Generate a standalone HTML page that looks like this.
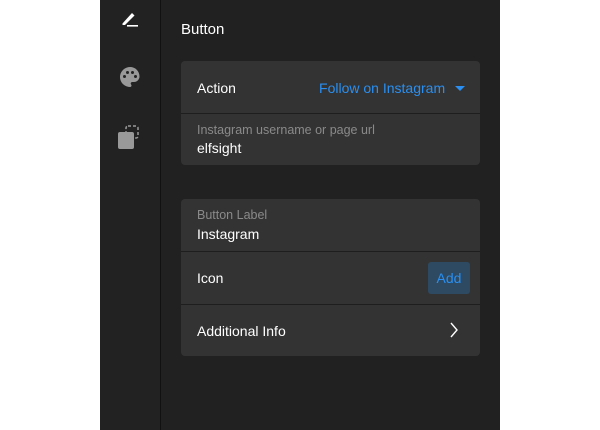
<!DOCTYPE html>
<html><head><style>
*{margin:0;padding:0;box-sizing:border-box}
body{width:600px;height:430px;background:#fff;font-family:"Liberation Sans",sans-serif;position:relative;overflow:hidden}
.side{position:absolute;left:100px;top:0;width:60px;height:430px;background:#222}
.line{position:absolute;left:160px;top:0;width:1px;height:430px;background:#111}
.main{position:absolute;left:161px;top:0;width:339px;height:430px;background:#212121}
.t{position:absolute;left:181px;top:21px;color:#fff;font-size:15px}
.card{position:absolute;left:181px;width:299px;background:#333;border-radius:4px}
.row{position:absolute;left:16px;color:#fff;font-size:14px}
.hr{position:absolute;left:0;width:299px;height:1px;background:#1e1e1e}
.sub{color:#8a8a8a;font-size:12.5px}
</style></head><body>
<div class="side"></div><div class="line"></div><div class="main"></div>
<svg style="position:absolute;left:120px;top:8px" width="22" height="22" viewBox="0 0 22 22"><path d="M2.5 15.5 L12 5 L14.5 7.5 L5 17 L2.5 17Z" fill="#fff"/><rect x="7" y="17" width="11" height="1.6" fill="#fff"/></svg>
<svg style="position:absolute;left:118px;top:65px" width="24" height="24" viewBox="0 0 24 24"><path d="M12 2C6.5 2 2 6.5 2 12s4.5 10 10 10c1 0 1.5-.7 1.5-1.5 0-.4-.2-.7-.4-1-.3-.3-.4-.6-.4-1 0-.8.7-1.5 1.5-1.5H16c3 0 5.5-2.5 5.5-5.5C21.5 6 17.3 2 12 2z" fill="#999"/><circle cx="6.5" cy="11.5" r="1.5" fill="#222"/><circle cx="9.5" cy="7.5" r="1.5" fill="#222"/><circle cx="14.5" cy="7.5" r="1.5" fill="#222"/><circle cx="17.5" cy="11.5" r="1.5" fill="#222"/></svg>
<svg style="position:absolute;left:117px;top:124px" width="26" height="26" viewBox="0 0 26 26"><rect x="9" y="2" width="12" height="12" rx="2" fill="none" stroke="#999" stroke-width="1.5" stroke-dasharray="3 2"/><rect x="1" y="8" width="16" height="17" rx="2" fill="#999"/></svg>
<div class="t">Button</div>
<div class="card" style="top:61px;height:104px">
<div class="row" style="top:19px">Action</div>
<div style="position:absolute;right:15px;top:19px;color:#2a8ff0;font-size:14px">Follow on Instagram <span style="display:inline-block;width:0;height:0;border-left:5px solid transparent;border-right:5px solid transparent;border-top:5px solid #2a8ff0;margin-left:6px;vertical-align:2px"></span></div>
<div class="hr" style="top:52px"></div>
<div class="row sub" style="top:62px">Instagram username or page url</div>
<div class="row" style="top:79px">elfsight</div>
</div>
<div class="card" style="top:199px;height:157px">
<div class="row sub" style="top:9px">Button Label</div>
<div class="row" style="top:27px">Instagram</div>
<div class="hr" style="top:52px"></div>
<div class="row" style="top:71px">Icon</div>
<div style="position:absolute;left:247px;top:63px;width:42px;height:32px;background:#2d4a62;border-radius:3px;color:#2a8ff0;font-size:14px;text-align:center;line-height:32px">Add</div>
<div class="hr" style="top:105px"></div>
<div class="row" style="top:124px">Additional Info</div>
<svg style="position:absolute;left:268px;top:123px" width="10" height="16" viewBox="0 0 10 16"><path d="M2 1 L8 8 L2 15" fill="none" stroke="#fff" stroke-width="1.4"/></svg>
</div>
</body></html>
